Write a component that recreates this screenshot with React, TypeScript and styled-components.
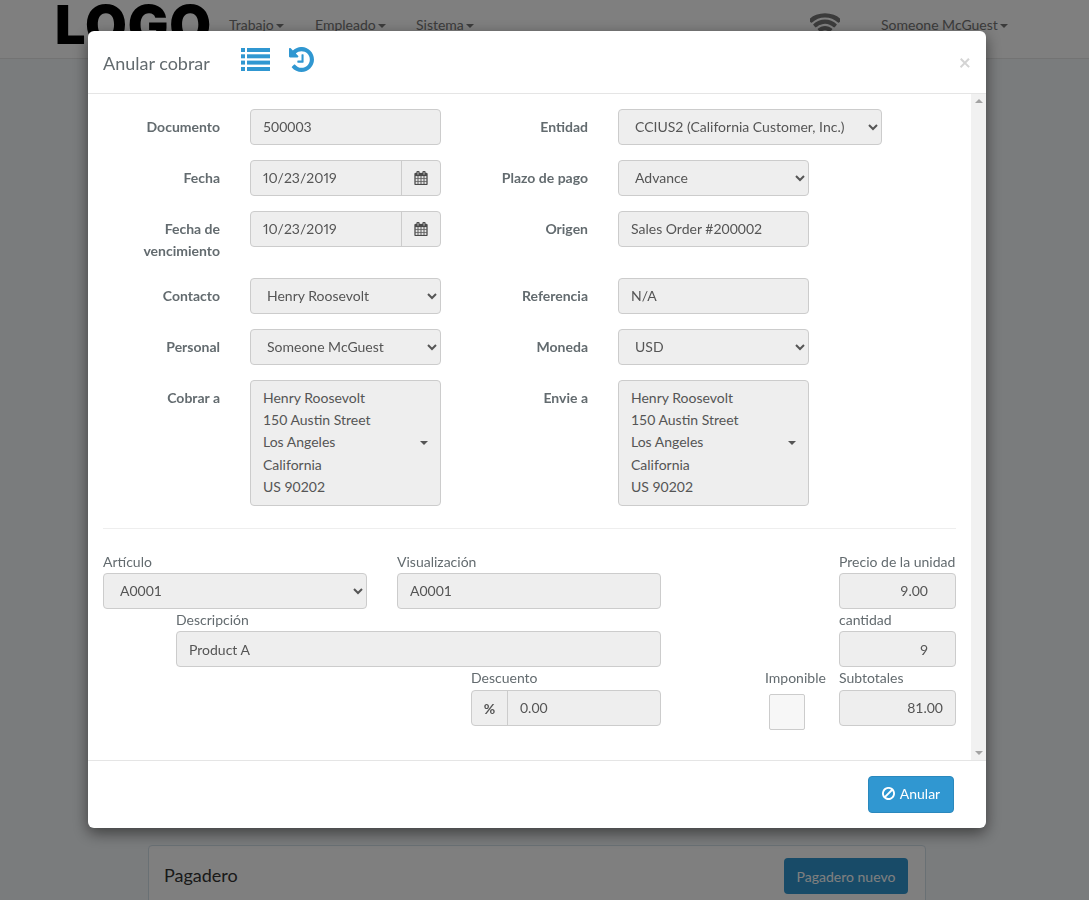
import React from "react";
import styled, { createGlobalStyle } from "styled-components";

const Global = createGlobalStyle`
  html, body { margin: 0; padding: 0; height: 900px; overflow: hidden; background: #f5f8fa; }
  body { font-family: Lato, "Liberation Sans", sans-serif; font-size: 14px; color: #555; }
  * { box-sizing: border-box; }
`;

const Page = styled.div`
  height: 900px;
  overflow: hidden;
`;
const Navbar = styled.header`
  height: 59px;
  border-bottom: 1px solid #e7e7e7;
  background: #fff;
  padding-left: 55px;
  display: flex;
  align-items: flex-start;
  color: #777;
`;
const Logo = styled.span`
  font-family: Inter, sans-serif;
  font-weight: 900;
  font-size: 54px;
  line-height: 50px;
  color: #000;
  width: 174px;
  letter-spacing: 0.9px;
`;
const NavItem = styled.span<{ $w: number }>`
  width: ${(p) => p.$w}px;
  padding-top: 15px;
  line-height: 20px;
  white-space: nowrap;
`;
const Caret = styled.i`
  display: inline-block;
  width: 0;
  height: 0;
  margin-left: 2px;
  vertical-align: middle;
  border-top: 4px solid currentColor;
  border-left: 4px solid transparent;
  border-right: 4px solid transparent;
`;
const WifiSlot = styled.span`
  width: 71px;
  margin-left: 334px;
  padding-top: 11px;
  line-height: 0;
  color: #777;
`;
const Panel = styled.section`
  margin: 786px 0 0 148px;
  width: 778px;
  height: 120px;
  background: #fff;
  border: 1px solid #d3e0e9;
  border-radius: 4px;
  padding: 12px 17px 0 15px;
  display: flex;
  justify-content: space-between;
  align-items: flex-start;
`;
const PanelTitle = styled.h3`
  margin: -1px 0 0;
  font-size: 18px;
  font-weight: 400;
  line-height: 36px;
  color: #333;
`;
const PanelButton = styled.span`
  width: 124px;
  height: 36px;
  border-radius: 4px;
  background: #3097d1;
  color: #fff;
  display: flex;
  align-items: center;
  justify-content: center;
`;
const Backdrop = styled.div`
  position: fixed;
  inset: 0;
  background: rgba(0, 0, 0, 0.5);
`;
const Modal = styled.div`
  position: fixed;
  left: 88px;
  top: 31px;
  width: 898px;
  height: 797px;
  background: #fff;
  border-radius: 6px;
  box-shadow: 0 5px 15px rgba(0, 0, 0, 0.5);
  display: flex;
  flex-direction: column;
  overflow: hidden;
`;
const ModalHeader = styled.div`
  height: 63px;
  flex: none;
  border-bottom: 1px solid #e5e5e5;
  display: flex;
  align-items: center;
  padding: 0 15px;
  color: #3097d1;
`;
const ModalTitle = styled.h4`
  margin: 2px 30px 0 0;
  width: 108px;
  font-size: 18px;
  font-weight: 400;
  color: #636b6f;
  white-space: nowrap;
`;
const IconButton = styled.span`
  display: flex;
  margin-right: 19px;
  margin-top: -5px;
`;
const Close = styled.span`
  margin-left: auto;
  margin-top: -2px;
  font-size: 21px;
  font-weight: 700;
  line-height: 1;
  color: #d4d4d4;
`;
const BodyRow = styled.div`
  height: 666px;
  flex: none;
  display: flex;
`;
const ModalBody = styled.div`
  flex: 1;
  min-width: 0;
  overflow: hidden;
  padding: 15px;
`;
const ScrollTrack = styled.div`
  width: 15px;
  flex: none;
  background: #f1f1f1;
  display: flex;
  flex-direction: column;
  justify-content: space-between;
  align-items: center;
  padding: 5px 0;
`;
const ScrollArrow = styled.i<{ $down?: boolean }>`
  width: 0;
  height: 0;
  border-left: 4px solid transparent;
  border-right: 4px solid transparent;
  ${(p) => (p.$down ? "border-top: 4px solid #a3a3a3;" : "border-bottom: 4px solid #a3a3a3;")}
`;
const TopGrid = styled.div`
  display: grid;
  grid-template-columns: 117px 191px 117px 264px;
  column-gap: 30px;
  row-gap: 15px;
  align-items: start;
`;
const RowLabel = styled.label`
  font-weight: 700;
  text-align: right;
  padding-top: 7px;
  line-height: 22px;
  min-height: 36px;
  color: #636b6f;
`;
const TallLabel = styled(RowLabel)`
  min-height: 52px;
`;
const Input = styled.div<{ $right?: boolean; $pr?: number; $pb?: number }>`
  height: 36px;
  width: 100%;
  background: #eee;
  border: 1px solid #ccc;
  border-radius: 4px;
  padding: 0 ${(p) => p.$pr ?? 12}px ${(p) => p.$pb ?? 1}px 12px;
  display: flex;
  align-items: center;
  justify-content: ${(p) => (p.$right ? "flex-end" : "flex-start")};
  white-space: nowrap;
`;
const ShortInput = styled(Input)`
  width: 191px;
`;
const Select = styled.select<{ $w?: number }>`
  height: 36px;
  width: ${(p) => (p.$w ? `${p.$w}px` : "100%")};
  background-color: #eee;
  border: 1px solid #ccc;
  border-radius: 4px;
  padding: 0 8px 2px 12px;
  font: inherit;
  color: #555;
`;
const Group = styled.div`
  display: flex;
  height: 36px;
  background: #eee;
  border: 1px solid #ccc;
  border-radius: 4px;
`;
const GroupText = styled.span`
  flex: 1;
  padding: 0 0 1px 12px;
  display: flex;
  align-items: center;
`;
const DateText = styled(GroupText)`
  font-variant-numeric: proportional-nums;
`;
const CalAddon = styled.span`
  width: 39px;
  border-left: 1px solid #ccc;
  display: flex;
  align-items: center;
  justify-content: center;
  color: #4a4a4a;
`;
const PctAddon = styled.span`
  width: 36px;
  border-right: 1px solid #ccc;
  display: flex;
  align-items: center;
  justify-content: center;
  font-weight: 700;
`;
const Address = styled.div`
  position: relative;
  width: 191px;
  height: 126px;
  background: #eee;
  border: 1px solid #ccc;
  border-radius: 4px;
  padding: 6px 12px;
  line-height: 22.2px;
`;
const AddressCaret = styled.i`
  position: absolute;
  right: 12px;
  top: 60px;
  border-top: 4px solid #555;
  border-left: 4px solid transparent;
  border-right: 4px solid transparent;
`;
const Divider = styled.hr`
  margin: 22px 0;
  border: 0;
  border-top: 1px solid #eee;
`;
const ItemRow = styled.div`
  display: flex;
  align-items: flex-start;
`;
const Field = styled.div<{ $w: number; $ml?: number; $auto?: boolean }>`
  width: ${(p) => p.$w}px;
  flex: none;
  margin-left: ${(p) => (p.$auto ? "auto" : `${p.$ml ?? 0}px`)};
`;
const FieldLabel = styled.label<{ $h?: number }>`
  display: block;
  height: ${(p) => p.$h ?? 22}px;
  line-height: 22px;
  white-space: nowrap;
  color: #636b6f;
`;
const Check = styled.span`
  display: block;
  width: 36px;
  height: 36px;
  margin: 4px 0 0 4px;
  background: #f7f7f7;
  border: 1px solid #ccc;
  border-radius: 2px;
`;
const ModalFooter = styled.div`
  flex: 1;
  border-top: 1px solid #e5e5e5;
  display: flex;
  justify-content: flex-end;
  align-items: flex-start;
  padding: 15px 32px 0 0;
`;
const VoidButton = styled.span`
  width: 86px;
  height: 37px;
  padding-bottom: 2px;
  background: #3097d1;
  border: 1px solid #2a88bd;
  border-radius: 4px;
  color: #fff;
  display: flex;
  align-items: center;
  justify-content: center;
  gap: 5px;
`;

const ListIcon = () => (
  <svg width="29" height="23" viewBox="0 0 29 23" fill="currentColor">
    <rect x="0" y="0" width="4" height="4" />
    <rect x="6" y="0" width="23" height="4" />
    <rect x="0" y="6.3" width="4" height="4" />
    <rect x="6" y="6.3" width="23" height="4" />
    <rect x="0" y="12.6" width="4" height="4" />
    <rect x="6" y="12.6" width="23" height="4" />
    <rect x="0" y="19" width="4" height="4" />
    <rect x="6" y="19" width="23" height="4" />
  </svg>
);

const HistoryIcon = () => (
  <svg width="25" height="25" viewBox="128 128 1536 1536" fill="currentColor">
    <path d="M1664 896q0 156-61 298t-164 245-245 164-298 61q-172 0-327-72.5t-264-204.5q-9-13-8.5-23.5t9.5-20.5l137-138q10-9 25-9 16 2 23 12 73 95 179 147t225 52q104 0 198.5-40.5t163.5-109.5 109.5-163.5 40.5-198.5-40.5-198.5-109.5-163.5-163.5-109.5-198.5-40.5q-98 0-188 35.5t-160 101.5l137 138q31 30 14 69-17 40-59 40h-448q-26 0-45-19t-19-45v-448q0-42 40-59 39-17 69 14l130 129q107-101 244.5-156.5t284.5-55.5q156 0 298 61t245 164 164 245 61 298zm-640-288v448q0 14-9 23t-23 9h-320q-14 0-23-9t-9-23v-64q0-14 9-23t23-9h224v-352q0-14 9-23t23-9h64q14 0 23 9t9 23z" />
  </svg>
);

const CalendarIcon = () => (
  <svg width="14" height="14" viewBox="0 0 1792 1792" fill="currentColor" stroke="currentColor" strokeWidth="36">
    <path d="M192 1664h288v-288h-288v288zm352 0h320v-288h-320v288zm-352-352h288v-320h-288v320zm352 0h320v-320h-320v320zm-352-384h288v-288h-288v288zm736 736h320v-288h-320v288zm-384-736h320v-288h-320v288zm768 736h288v-288h-288v288zm-384-352h320v-320h-320v320zm-352-864v-288q0-13-9.5-22.5t-22.5-9.5h-64q-13 0-22.5 9.5t-9.5 22.5v288q0 13 9.5 22.5t22.5 9.5h64q13 0 22.5-9.5t9.5-22.5zm736 864h288v-320h-288v320zm-384-384h320v-288h-320v288zm384 0h288v-288h-288v288zm32-480v-288q0-13-9.5-22.5t-22.5-9.5h-64q-13 0-22.5 9.5t-9.5 22.5v288q0 13 9.5 22.5t22.5 9.5h64q13 0 22.5-9.5t9.5-22.5zm384-64v1280q0 52-38 90t-90 38h-1408q-52 0-90-38t-38-90v-1280q0-52 38-90t90-38h128v-96q0-66 47-113t113-47h64q66 0 113 47t47 113v96h384v-96q0-66 47-113t113-47h64q66 0 113 47t47 113v96h128q52 0 90 38t38 90z" />
  </svg>
);

const BanIcon = () => (
  <svg width="13" height="13" viewBox="128 128 1536 1536" fill="currentColor">
    <path d="M1440 893q0-161-87-295l-754 753q137 89 297 89 111 0 211.5-43.5t173.5-116.5 116-174.5 43-212.5zm-999 299l755-754q-135-91-300-91-148 0-273 73t-198 199-73 274q0 162 89 299zm1223-299q0 157-61 300t-163.5 246-245 164-298.5 61-298.5-61-245-164-163.5-246-61-300 61-299.5 163.5-245.5 245-164 298.5-61 298.5 61 245 164 163.5 245.5 61 299.5z" />
  </svg>
);

const WifiIcon = () => (
  <svg width="30" height="30" viewBox="0 0 1792 1792" fill="currentColor">
    <path d="M896 1523q-20 0-93-73.5t-73-93.5q0-32 62.5-54t103.5-22 103.5 22 62.5 54q0 20-73 93.5t-93 73.5zm270-271q-2 0-40-25t-101.5-50-128.5-25-128.5 25-101 50-40.5 25q-18 0-93.5-75t-75.5-93q0-13 10-23 78-77 196-121t233-44 233 44 196 121q10 10 10 23 0 18-75.5 93t-93.5 75zm273-272q-11 0-23-8-136-105-252-154.5t-268-49.5q-85 0-170.5 22t-149 53-113.5 62-79 53-31 22q-17 0-92-75t-75-93q0-12 10-22 132-132 320-205t380-73 380 73 320 205q10 10 10 22 0 18-75 93t-92 75zm271-271q-11 0-22-9-179-157-371.5-236.5t-420.5-79.5-420.5 79.5-371.5 236.5q-11 9-22 9-17 0-92.5-75t-75.5-93q0-13 10-23 187-186 445-288t527-102 527 102 445 288q10 10 10 23 0 18-75.5 93t-92.5 75z" />
  </svg>
);

const Cal = () => (
  <CalAddon>
    <CalendarIcon />
  </CalAddon>
);

const Addr = ({ lines }: { lines: string[] }) => (
  <Address>
    {lines.map((l) => (
      <div key={l}>{l}</div>
    ))}
    <AddressCaret />
  </Address>
);

const bill = ["Henry Roosevolt", "150 Austin Street", "Los Angeles", "California", "US 90202"];

export default function App() {
  return (
    <Page>
      <Global />
      <Navbar>
        <Logo>LOGO</Logo>
        <NavItem $w={86}>Trabajo<Caret /></NavItem>
        <NavItem $w={101}>Empleado<Caret /></NavItem>
        <NavItem $w={60}>Sistema<Caret /></NavItem>
        <WifiSlot><WifiIcon /></WifiSlot>
        <NavItem $w={140}>Someone McGuest<Caret /></NavItem>
      </Navbar>
      <Panel>
        <PanelTitle>Pagadero</PanelTitle>
        <PanelButton>Pagadero nuevo</PanelButton>
      </Panel>
      <Backdrop />
      <Modal>
        <ModalHeader>
          <ModalTitle>Anular cobrar</ModalTitle>
          <IconButton><ListIcon /></IconButton>
          <IconButton><HistoryIcon /></IconButton>
          <Close>×</Close>
        </ModalHeader>
        <BodyRow>
          <ModalBody>
            <TopGrid>
              <RowLabel>Documento</RowLabel>
              <ShortInput>500003</ShortInput>
              <RowLabel>Entidad</RowLabel>
              <Select defaultValue="c"><option value="c">CCIUS2 (California Customer, Inc.)</option></Select>

              <RowLabel>Fecha</RowLabel>
              <Group><DateText>10/23/2019</DateText><Cal /></Group>
              <RowLabel>Plazo de pago</RowLabel>
              <Select $w={191}><option>Advance</option></Select>

              <TallLabel>Fecha de vencimiento</TallLabel>
              <Group><DateText>10/23/2019</DateText><Cal /></Group>
              <TallLabel>Origen</TallLabel>
              <ShortInput>Sales Order #200002</ShortInput>

              <RowLabel>Contacto</RowLabel>
              <Select><option>Henry Roosevolt</option></Select>
              <RowLabel>Referencia</RowLabel>
              <ShortInput>N/A</ShortInput>

              <RowLabel>Personal</RowLabel>
              <Select><option>Someone McGuest</option></Select>
              <RowLabel>Moneda</RowLabel>
              <Select $w={191}><option>USD</option></Select>

              <RowLabel>Cobrar a</RowLabel>
              <Addr lines={bill} />
              <RowLabel>Envie a</RowLabel>
              <Addr lines={bill} />
            </TopGrid>
            <Divider />
            <ItemRow>
              <Field $w={264}>
                <FieldLabel>Artículo</FieldLabel>
                <Select><option>A0001</option></Select>
              </Field>
              <Field $w={264} $ml={30}>
                <FieldLabel>Visualización</FieldLabel>
                <Input>A0001</Input>
              </Field>
              <Field $w={117} $auto>
                <FieldLabel>Precio de la unidad</FieldLabel>
                <Input $right $pr={27}>9.00</Input>
              </Field>
            </ItemRow>
            <ItemRow>
              <Field $w={485} $ml={73}>
                <FieldLabel>Descripción</FieldLabel>
                <Input $pb={0}>Product A</Input>
              </Field>
              <Field $w={117} $auto>
                <FieldLabel>cantidad</FieldLabel>
                <Input $right $pr={27} $pb={0}>9</Input>
              </Field>
            </ItemRow>
            <ItemRow>
              <Field $w={190} $ml={368}>
                <FieldLabel $h={23}>Descuento</FieldLabel>
                <Group><PctAddon>%</PctAddon><GroupText>0.00</GroupText></Group>
              </Field>
              <Field $w={62} $ml={104}>
                <FieldLabel $h={23}>Imponible</FieldLabel>
                <Check />
              </Field>
              <Field $w={117} $auto>
                <FieldLabel $h={23}>Subtotales</FieldLabel>
                <Input $right>81.00</Input>
              </Field>
            </ItemRow>
          </ModalBody>
          <ScrollTrack>
            <ScrollArrow />
            <ScrollArrow $down />
          </ScrollTrack>
        </BodyRow>
        <ModalFooter>
          <VoidButton><BanIcon />Anular</VoidButton>
        </ModalFooter>
      </Modal>
    </Page>
  );
}
